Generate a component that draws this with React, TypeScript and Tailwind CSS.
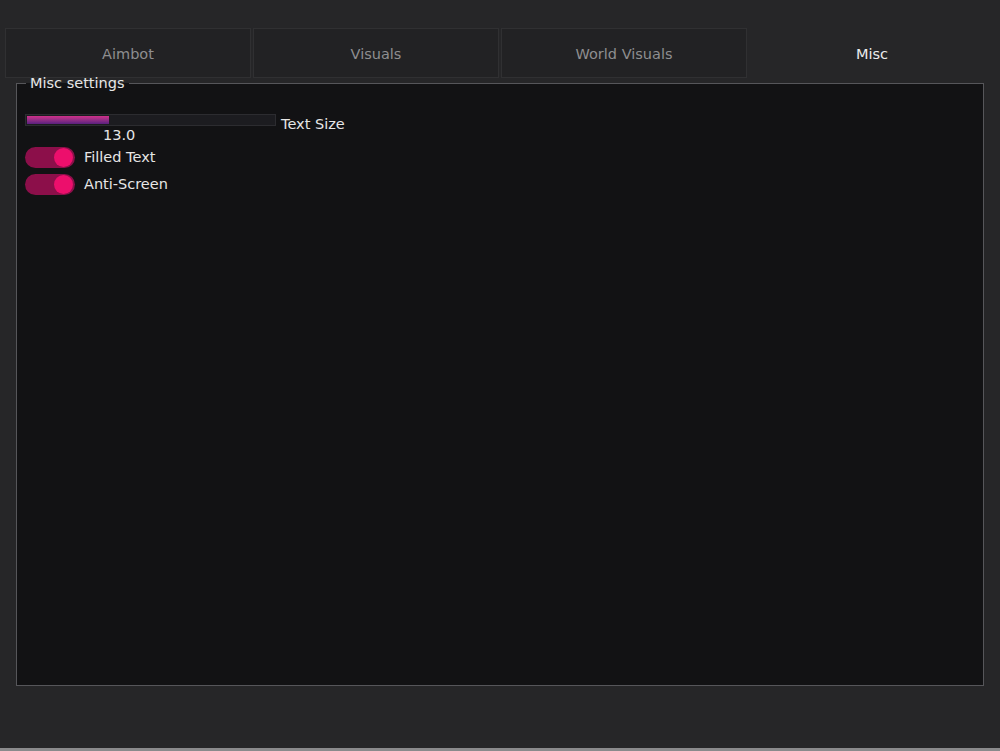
import { useState } from "react";

const tabs = ["Aimbot", "Visuals", "World Visuals", "Misc"];

const Toggle = ({ label, on, onClick }: { label: string; on: boolean; onClick: () => void }) => (
  <div className="flex items-center gap-[9px] h-[27px]">
    <button
      onClick={onClick}
      className={`w-[50px] h-[21px] rounded-full flex items-center px-[2px] ${
        on ? "bg-[#8c0f4a] justify-end" : "bg-[#3a3a3e] justify-start"
      }`}
    >
      <span className={`w-[19px] h-[19px] rounded-full ${on ? "bg-[#ec0f6c]" : "bg-[#888]"}`} />
    </button>
    <span className="text-[14.5px] text-[#e6e6e6]">{label}</span>
  </div>
);

export default function App() {
  const [active, setActive] = useState(3);
  const [filled, setFilled] = useState(true);
  const [antiScreen, setAntiScreen] = useState(true);
  const textSize = 13.0;
  // slider covers 1..37
  const pct = ((textSize - 1) / 36) * 100;

  return (
    <div
      className="w-[1000px] h-[751px] bg-[#262628] flex flex-col"
      style={{ fontFamily: '"DejaVu Sans", Verdana, sans-serif' }}
    >
      <div className="flex gap-[2px] pt-[28px] pl-[5px] pr-[5px]">
        {tabs.map((t, i) => (
          <button
            key={t}
            onClick={() => setActive(i)}
            className={`w-[246px] h-[50px] pt-[4px] text-[14.5px] ${
              i === active
                ? "text-[#ececec]"
                : "bg-[#222224] border border-[#303032] text-[#8e8e90]"
            }`}
          >
            {t}
          </button>
        ))}
      </div>

      <fieldset className="mx-[16px] -mt-[2px] h-[610px] border border-[#56565a] bg-[#121214] px-[8px] pt-[24px]">
        <legend className="ml-[1px] px-[4px] text-[14.5px] text-[#e6e6e6] leading-[14px]">
          Misc settings
        </legend>

        <div className="flex items-start gap-[5px]">
          <div className="flex flex-col">
            <div className="w-[251px] h-[12px] bg-[#1c1c20] border border-[#2c2c30] p-[1px]">
              <div
                className="h-full bg-gradient-to-b from-[#d0308a] to-[#5a1f7e]"
                style={{ width: `${pct}%` }}
              />
            </div>
            <span className="text-[14.5px] text-[#e6e6e6] leading-[16px] ml-[78px] mt-[1px]">
              {textSize.toFixed(1)}
            </span>
          </div>
          <span className="text-[14.5px] text-[#e6e6e6] leading-[16px] mt-[2px]">Text Size</span>
        </div>

        <div className="flex flex-col mt-[1px]">
          <Toggle label="Filled Text" on={filled} onClick={() => setFilled(!filled)} />
          <Toggle label="Anti-Screen" on={antiScreen} onClick={() => setAntiScreen(!antiScreen)} />
        </div>
      </fieldset>

      <div className="mt-auto h-[3px] bg-[#8a8a8c]" />
    </div>
  );
}
